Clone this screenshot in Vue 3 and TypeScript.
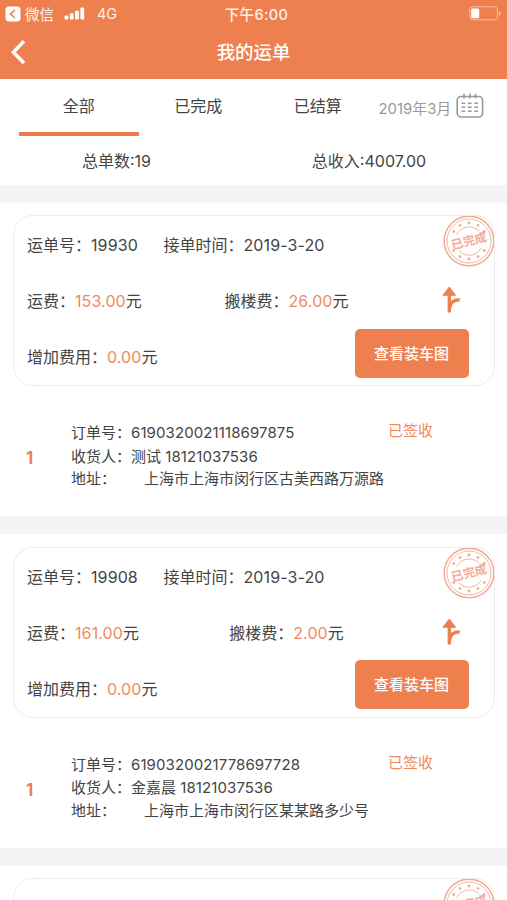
<script setup lang="ts">
interface Order {
  index: number
  orderNo: string
  receiver: string
  phone: string
  address: string
  status: string
}

interface Waybill {
  id: string
  date: string
  freight: string
  carryFee: string
  extraFee: string
  orders: Order[]
}

const tabs: string[] = ['全部', '已完成', '已结算']
const activeTab = '全部'

const waybills: Waybill[] = [
  {
    id: '19930',
    date: '2019-3-20',
    freight: '153.00',
    carryFee: '26.00',
    extraFee: '0.00',
    orders: [
      {
        index: 1,
        orderNo: '6190320021118697875',
        receiver: '测试',
        phone: '18121037536',
        address: '上海市上海市闵行区古美西路万源路',
        status: '已签收',
      },
    ],
  },
  {
    id: '19908',
    date: '2019-3-20',
    freight: '161.00',
    carryFee: '2.00',
    extraFee: '0.00',
    orders: [
      {
        index: 1,
        orderNo: '6190320021778697728',
        receiver: '金嘉晨',
        phone: '18121037536',
        address: '上海市上海市闵行区某某路多少号',
        status: '已签收',
      },
    ],
  },
]

const starAngles: number[] = [-58, -30, 0, 30, 58, 122, 150, 180, 210, 238]
</script>

<template>
  <div class="page">
    <header class="header">
      <div class="status-bar">
        <div class="status-left">
          <svg class="back-app" viewBox="0 0 16 16">
            <rect x="0.5" y="0.5" width="15" height="15" rx="3.5" fill="#fff" />
            <path d="M9.8 4 5.6 8l4.2 4" fill="none" stroke="#ee8050" stroke-width="1.7" />
          </svg>
          <span class="app-name">微信</span>
          <svg class="signal" viewBox="0 0 21 13">
            <rect x="0.5" y="8.5" width="3.8" height="4" rx="1" />
            <rect x="5.8" y="6.3" width="3.8" height="6.2" rx="1" />
            <rect x="11.1" y="3.7" width="3.8" height="8.8" rx="1" />
            <rect x="16.4" y="0.5" width="3.8" height="12" rx="1" />
          </svg>
          <span class="network">4G</span>
        </div>
        <span class="clock">下午6:00</span>
        <svg class="battery" viewBox="0 0 32 15">
          <rect x="0.8" y="0.8" width="27.6" height="13" rx="3" fill="none" stroke="#f7bfa4" stroke-width="1" />
          <rect x="2.2" y="2.4" width="8" height="9.8" rx="1.5" fill="#fff" />
          <path d="M30 5v5c1.3-.5 1.7-1.5 1.7-2.5S31.3 5.5 30 5z" fill="#f7bfa4" />
        </svg>
      </div>
      <div class="nav-bar">
        <svg class="back" viewBox="0 0 16 26">
          <path d="M14 2.3 3.4 13.2 14 24" fill="none" stroke="#fff" stroke-width="3.5" />
        </svg>
        <h1 class="title">我的运单</h1>
      </div>
    </header>

    <nav class="tabs">
      <div v-for="tab in tabs" :key="tab" class="tab" :class="{ active: tab === activeTab }">{{ tab }}</div>
      <div class="month">
        <span>2019年3月</span>
        <svg class="calendar" viewBox="0 0 28 26">
          <rect x="1.2" y="3.5" width="25.4" height="20.5" rx="3.8" />
          <path d="M8 .8v4.8M13.9.8v4.8M19.5.8v4.8" />
          <path
            d="M5.5 10.2h3.7M11.9 10.2h3.7M18.3 10.2h3.7M5.5 14.2h3.7M11.9 14.2h3.7M18.3 14.2h3.7M5.5 18.2h3.7M11.9 18.2h3.7M18.3 18.2h3.7"
          />
        </svg>
      </div>
    </nav>

    <div class="summary">
      <span>总单数:19</span>
      <span>总收入:4007.00</span>
    </div>

    <section v-for="bill in waybills" :key="bill.id" class="waybill">
      <div class="card">
        <div class="row first">
          <span class="bill-no">运单号：<span class="num">{{ bill.id }}</span></span>
          <span>接单时间：<span class="num">{{ bill.date }}</span></span>
        </div>
        <div class="row fees">
          <span>运费：<span class="num price">{{ bill.freight }}</span>元</span>
          <span class="carry">搬楼费：<span class="num price">{{ bill.carryFee }}</span>元</span>
          <svg class="route" viewBox="0 0 20 28">
            <path d="M8.3 1 14.6 9.3H2z" fill="#ee8050" stroke="#ee8050" stroke-linejoin="round" />
            <path d="M8.3 8v18.5M8.7 22c.2-5.2 3.3-8 10-8.2" fill="none" stroke="#ee8050" stroke-width="3.4" />
          </svg>
        </div>
        <div class="row extra">
          <span>增加费用：<span class="num price">{{ bill.extraFee }}</span>元</span>
          <button class="view-btn">查看装车图</button>
        </div>
        <svg class="stamp" viewBox="-27 -27 54 54">
          <g fill="none" stroke="#f2ab93">
            <circle r="24.8" stroke-width="1.5" />
            <circle r="22" stroke-width="0.9" />
            <path d="M-12.3-6.5A14 14 0 0 1 10-10M12.3 7A14 14 0 0 1-10.5 9.500" stroke-width="0.9" />
          </g>
          <circle v-for="a in starAngles" :key="a" cy="-18" r="1.4" fill="#f2ab93" :transform="`rotate(${a})`" />
          <text class="stamp-text" text-anchor="middle" y="4.2" transform="rotate(-14)">已完成</text>
        </svg>
      </div>

      <div v-for="order in bill.orders" :key="order.orderNo" class="order">
        <span class="index">{{ order.index }}</span>
        <div class="details">
          <div class="line">订单号：<span class="num">{{ order.orderNo }}</span></div>
          <div class="line">收货人：{{ order.receiver }}&nbsp;<span class="num">{{ order.phone }}</span></div>
          <div class="line address"><span class="addr-label">地址：</span>{{ order.address }}</div>
        </div>
        <span class="state">{{ order.status }}</span>
      </div>
    </section>

    <section class="waybill">
      <div class="card">
        <svg class="stamp" viewBox="-27 -27 54 54">
          <g fill="none" stroke="#f2ab93">
            <circle r="24.8" stroke-width="1.5" />
            <circle r="22" stroke-width="0.9" />
            <path d="M-12.3-6.5A14 14 0 0 1 10-10M12.3 7A14 14 0 0 1-10.5 9.500" stroke-width="0.9" />
          </g>
          <circle v-for="a in starAngles" :key="a" cy="-18" r="1.4" fill="#f2ab93" :transform="`rotate(${a})`" />
          <text class="stamp-text" text-anchor="middle" y="4.2" transform="rotate(-14)">已完成</text>
        </svg>
      </div>
    </section>
  </div>
</template>

<style>
body {
  margin: 0;
  overflow: hidden;
}
</style>

<style scoped>
.page {
  width: 507px;
  height: 900px;
  overflow: hidden;
  background: #fff;
  color: #444;
  font-family: Inter, 'Noto Sans CJK SC', sans-serif;
  font-size: 16px;
  white-space: nowrap;
}
.header {
  height: 79px;
  background: #ee8050;
  color: #fff;
}
.status-bar {
  display: grid;
  grid-template-columns: 1fr auto 1fr;
  align-items: center;
  height: 27px;
  padding: 0 5px;
  font-size: 14px;
  color: #fff0e6;
}
.status-left {
  display: flex;
  align-items: center;
}
.back-app {
  width: 16px;
  height: 16px;
}
.app-name {
  margin-left: 4px;
  font-size: 14.5px;
}
.signal {
  width: 21px;
  height: 13px;
  margin-left: 10px;
  fill: #fff;
}
.network {
  margin-left: 12px;
  font-size: 14.5px;
}
.clock {
  padding-left: 6px;
  font-size: 14.5px;
  font-weight: 500;
  letter-spacing: 0.4px;
}
.battery {
  justify-self: end;
  width: 32px;
  height: 15px;
  margin-right: 1px;
}
.nav-bar {
  display: grid;
  grid-template-columns: 1fr auto 1fr;
  align-items: center;
  height: 50px;
  padding: 0 10px;
}
.back {
  width: 16px;
  height: 26px;
}
.title {
  margin: -2px 0 0;
  font-size: 18.4px;
  font-weight: 500;
}
.tabs {
  display: flex;
  height: 57px;
  padding-left: 19px;
}
.tab {
  box-sizing: border-box;
  width: 119.5px;
  height: 57px;
  line-height: 54px;
  text-align: center;
  border-bottom: 4px solid transparent;
}
.tab.active {
  border-bottom-color: #e87d50;
}
.month {
  display: flex;
  align-items: center;
  height: 57px;
  margin-left: 1px;
  color: #999;
  font-size: 14.9px;
}
.calendar {
  width: 28px;
  height: 26px;
  margin: -4px 0 0 5px;
  fill: none;
  stroke: #999;
  stroke-width: 1.6;
}
.summary {
  display: grid;
  grid-template-columns: 233px 272px;
  height: 48.5px;
  line-height: 50px;
  text-align: center;
}
.waybill {
  box-sizing: border-box;
  height: 331.5px;
  padding: 12.5px 12.5px 0 13px;
  border-top: 18.5px solid #f4f4f4;
}
.card {
  box-sizing: border-box;
  position: relative;
  height: 171px;
  padding: 0 13px;
  overflow: hidden;
  border: 1px solid #ececec;
  border-radius: 20px;
}
.row {
  display: flex;
  align-items: center;
  height: 56px;
}
.bill-no {
  width: 136.5px;
}
.num {
  letter-spacing: 0.1px;
}
.fees {
  display: grid;
  grid-template-columns: 186px 147px 1fr;
}
.carry {
  text-align: center;
}
.route {
  width: 20px;
  height: 28px;
  margin-left: 81px;
}
.extra {
  justify-content: space-between;
  padding-right: 12px;
}
.price {
  color: #f08a5d;
}
.view-btn {
  width: 114px;
  height: 49px;
  margin-top: -6px;
  padding: 0 0 2px;
  border: 0;
  border-radius: 5px;
  background: #ee8050;
  color: #fff;
  font: 500 15px Inter, 'Noto Sans CJK SC', sans-serif;
}
.stamp {
  position: absolute;
  top: -2px;
  right: -2px;
  width: 54px;
  height: 54px;
}
.stamp-text {
  fill: #f2ab93;
  font-size: 12px;
  font-weight: 700;
}
.order {
  display: flex;
  align-items: flex-start;
  padding: 34px 0 0 13px;
  font-size: 15px;
}
.index {
  width: 45px;
  line-height: 77px;
  color: #ee8050;
  font-size: 17px;
  font-weight: 700;
}
.details {
  width: 317px;
  padding-top: 1px;
}
.line {
  height: 23.5px;
  line-height: 23.5px;
}
.address {
  height: 22px;
  line-height: 22px;
}
.addr-label {
  display: inline-block;
  width: 73px;
}
.state {
  line-height: 22px;
  color: #f08a5d;
}
</style>
